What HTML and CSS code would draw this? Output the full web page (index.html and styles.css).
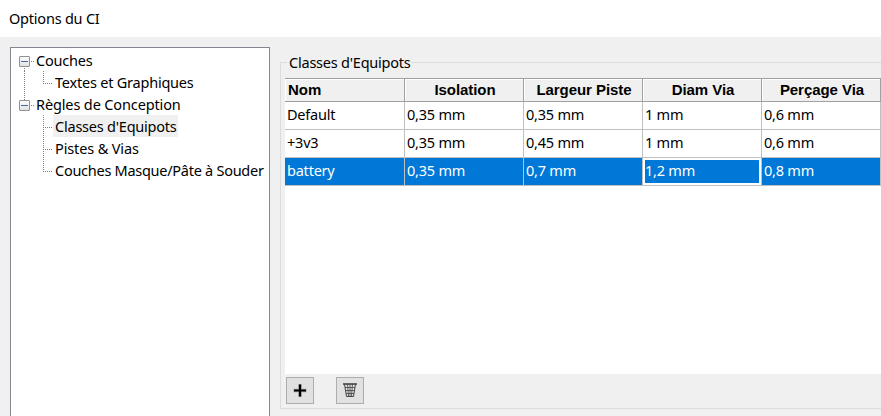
FILE: index.html
```html
<!DOCTYPE html>
<html lang="fr">
<head>
<meta charset="utf-8">
<title>Options du CI</title>
<link rel="stylesheet" href="styles.css">
</head>
<body>
<header class="titlebar"><span>Options du CI</span></header>
<main class="dialog">
  <ul class="tree">
    <li class="node"><svg class="lines" width="25" height="22"><use href="#expander"/><path class="dots" d="M13.5 19v3"/></svg><span class="label">Couches</span></li>
    <li class="node"><svg class="lines" width="44" height="22"><path class="dots" d="M13.5 0v22M32.5 0v12M32 12.5h9"/></svg><span class="label">Textes et Graphiques</span></li>
    <li class="node"><svg class="lines" width="25" height="22"><path class="dots" d="M13.5 0v7"/><use href="#expander"/></svg><span class="label wide">Règles de Conception</span></li>
    <li class="node"><svg class="lines" width="44" height="22"><path class="dots" d="M32.5 0v22M32 12.5h9"/></svg><span class="label selected">Classes d'Equipots</span></li>
    <li class="node"><svg class="lines" width="44" height="22"><path class="dots" d="M32.5 0v22M32 12.5h9"/></svg><span class="label wide">Pistes &amp; Vias</span></li>
    <li class="node"><svg class="lines" width="44" height="22"><path class="dots" d="M32.5 0v12M32 12.5h9"/></svg><span class="label tight">Couches Masque/Pâte à Souder</span></li>
  </ul>
  <section class="group">
    <h2 class="legend"><span>Classes d'Equipots</span></h2>
    <div class="grid">
      <table>
        <thead><tr><th class="first">Nom</th><th>Isolation</th><th>Largeur Piste</th><th>Diam Via</th><th>Perçage Via</th></tr></thead>
        <tbody>
          <tr><td>Default</td><td>0,35 mm</td><td>0,35 mm</td><td>1 mm</td><td>0,6 mm</td></tr>
          <tr><td>+3v3</td><td>0,35 mm</td><td>0,45 mm</td><td>1 mm</td><td>0,6 mm</td></tr>
          <tr class="active"><td>battery</td><td>0,35 mm</td><td>0,7 mm</td><td class="focus">1,2 mm</td><td>0,8 mm</td></tr>
        </tbody>
      </table>
    </div>
    <div class="buttons">
      <button type="button" aria-label="Ajouter"><svg width="26" height="25"><path d="M6.5 12.5h13M13 6v13" stroke="#000" stroke-opacity=".25" stroke-width="3.5"/><path d="M7 12.5h12M13 6.500v12" stroke="#000" stroke-width="2.2"/></svg></button>
      <button type="button" aria-label="Supprimer"><svg width="26" height="25" fill="none" stroke="#444"><path d="M6 6h14" stroke-width="1.600"/><path d="M7.500 6l2 12.500h7L18.500 6"/><path d="M10.500 6l1 12M13 6v12M15.500 6l-1 12M8 9.500h10M8.500 12.500h9M9 15.500h8" stroke-width=".8"/></svg></button>
    </div>
  </section>
</main>
<svg class="defs" width="0" height="0">
  <defs>
    <linearGradient id="face" x1="0" y1="0" x2="0" y2="1"><stop offset="0" stop-color="#fff"/><stop offset="1" stop-color="#e0e0e0"/></linearGradient>
    <g id="expander"><rect x="8.500" y="7.500" width="10" height="10" rx=".5" fill="url(#face)" stroke="#919191"/><path d="M10 12.500h7" stroke="#4b63a7"/><path class="dots" d="M20 12.500h4"/></g>
  </defs>
</svg>
</body>
</html>
```

FILE: styles.css
```css
* { box-sizing: border-box; }
body {
  margin: 0;
  height: 416px;
  overflow: hidden;
  background: #f0f0f0;
  color: #000;
  font: 14.5px/22px "Noto Sans", sans-serif;
  letter-spacing: -0.22px;
  display: flex;
  flex-direction: column;
}
.titlebar { flex: none; height: 37px; background: #fff; padding: 7px 0 0 9px; }
.dialog { flex: 1; display: flex; padding: 10px 0 0 10px; min-height: 0; }
.tree {
  flex: none;
  width: 260px;
  margin: 0;
  padding: 1px 0 0;
  list-style: none;
  background: #fff;
  border: 1px solid #828790;
  border-bottom: 0;
}
.node { display: flex; height: 22px; white-space: nowrap; }
.lines { flex: none; margin-right: -2px; }
.dots { fill: none; stroke: #808080; stroke-dasharray: 1 1; }
.label { padding: 0 2px; }
.wide { letter-spacing: -0.13px; }
.tight { letter-spacing: -0.27px; }
.selected { background: #f0f0f0; width: 125px; }
.defs { position: absolute; }
.group {
  flex: none;
  display: flex;
  flex-direction: column;
  width: 620px;
  height: 347px;
  margin: 15px 0 0 10px;
  border: 1px solid #dcdcdc;
  padding-left: 4px;
}
.legend { height: 15px; margin: 0 0 0 2px; font: inherit; }
.legend span { display: block; width: 124px; height: 22px; padding-left: 2px; background: #f0f0f0; position: relative; top: -12px; }
.grid { height: 296px; background: #fff; }
table { border-collapse: separate; border-spacing: 0; table-layout: fixed; width: 596px; }
th, td { width: 119px; padding: 0 0 0 2px; text-align: left; white-space: nowrap; }
th:first-child { width: 120px; }
th {
  height: 24px;
  font: bold 15px/20px "Liberation Sans", sans-serif;
  letter-spacing: -0.05px;
  text-align: center;
  background: #f0f0f0;
  border-top: 1px solid #a0a0a0;
  border-right: 1px solid #a0a0a0;
  border-bottom: 1px solid #a0a0a0;
  box-shadow: inset 1px 1px #fff;
}
th.first { text-align: left; padding-left: 3px; }
td { height: 28px; padding-bottom: 3px; border-right: 1px solid #c0c0c0; border-bottom: 1px solid #c0c0c0; }
.active td { background: #0078d7; color: #fff; }
.active .focus { box-shadow: inset 0 0 0 2px #fff; }
.buttons { display: flex; gap: 22px; padding: 3px 0 0 1px; }
button { width: 28px; height: 27px; padding: 0; border: 1px solid #adadad; background: #e1e1e1; display: flex; }
```
